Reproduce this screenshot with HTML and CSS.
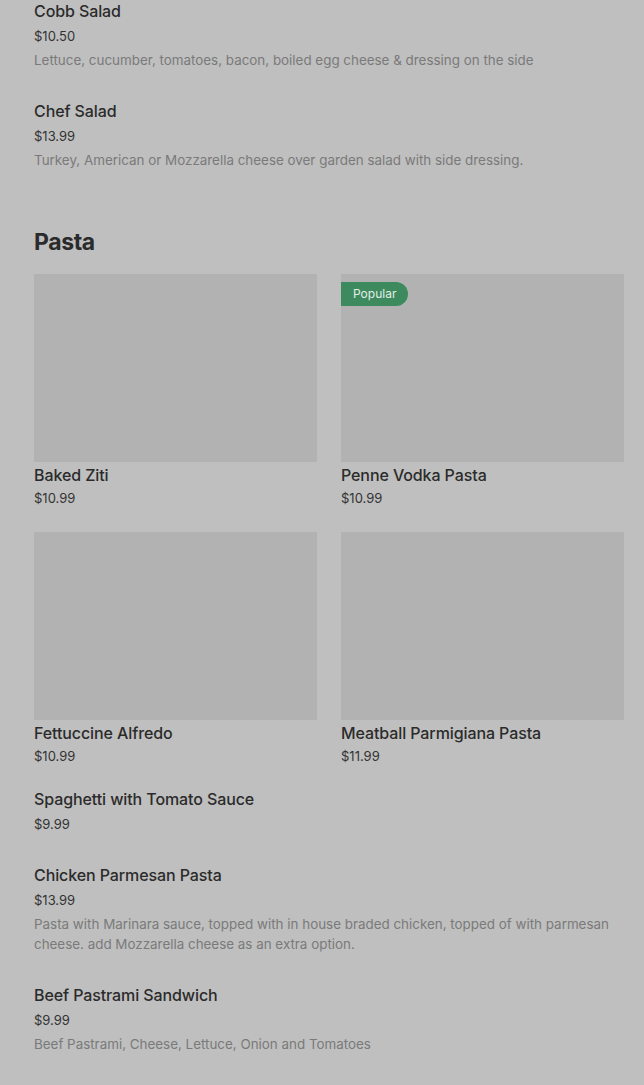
FILE: index.html
```html
<!DOCTYPE html>
<html>
<head>
<meta charset="utf-8">
<link rel="stylesheet" href="styles.css">
</head>
<body>
<main class="menu">
  <section class="list first">
    <div class="item">
      <div class="name">Cobb Salad</div>
      <div class="price">$10.50</div>
      <div class="desc">Lettuce, cucumber, tomatoes, bacon, boiled egg cheese &amp; dressing on the side</div>
    </div>
    <div class="item">
      <div class="name">Chef Salad</div>
      <div class="price">$13.99</div>
      <div class="desc">Turkey, American or Mozzarella cheese over garden salad with side dressing.</div>
    </div>
  </section>

  <h2 class="heading">Pasta</h2>

  <section class="grid">
    <div class="card">
      <div class="thumb"></div>
      <div class="name">Baked Ziti</div>
      <div class="price">$10.99</div>
    </div>
    <div class="card">
      <div class="thumb"><span class="badge">Popular</span></div>
      <div class="name">Penne Vodka Pasta</div>
      <div class="price">$10.99</div>
    </div>
    <div class="card">
      <div class="thumb"></div>
      <div class="name">Fettuccine Alfredo</div>
      <div class="price">$10.99</div>
    </div>
    <div class="card">
      <div class="thumb"></div>
      <div class="name">Meatball Parmigiana Pasta</div>
      <div class="price">$11.99</div>
    </div>
  </section>

  <section class="list">
    <div class="item">
      <div class="name">Spaghetti with Tomato Sauce</div>
      <div class="price">$9.99</div>
    </div>
    <div class="item">
      <div class="name">Chicken Parmesan Pasta</div>
      <div class="price">$13.99</div>
      <div class="desc">Pasta with Marinara sauce, topped with in house braded chicken, topped of with parmesan cheese. add Mozzarella cheese as an extra option.</div>
    </div>
    <div class="item">
      <div class="name">Beef Pastrami Sandwich</div>
      <div class="price">$9.99</div>
      <div class="desc">Beef Pastrami, Cheese, Lettuce, Onion and Tomatoes</div>
    </div>
  </section>
</main>
</body>
</html>
```

FILE: styles.css
```css
html, body {
  margin: 0;
  padding: 0;
  background: #bfbfbf;
}
body {
  font-family: Inter, "Noto Sans", "Liberation Sans", sans-serif;
  color: #2b2b2b;
  width: 644px;
  height: 1085px;
  overflow: hidden;
}
.menu {
  padding: 0 20px 0 34px;
}
.list.first {
  margin-top: -1px;
}
.item {
  padding-bottom: 29px;
}
.name {
  font-size: 16px;
  font-weight: 500;
  line-height: 24px;
  letter-spacing: -0.1px;
  color: #2b2b2b;
}
.price {
  margin-top: 3px;
  font-size: 13px;
  line-height: 20px;
  color: #333;
}
.desc {
  margin-top: 4px;
  font-size: 13.4px;
  line-height: 20px;
  color: #7a7a7a;
}
.heading {
  margin: 27px 0 0 0;
  font-size: 23px;
  font-weight: 700;
  line-height: 32px;
  color: #2b2b2b;
  letter-spacing: -0.4px;
}
.grid {
  margin-top: 16px;
  display: grid;
  grid-template-columns: 283px 283px;
  column-gap: 24px;
  row-gap: 24px;
}
.thumb {
  position: relative;
  height: 188px;
  background: #b2b2b2;
}
.card .name {
  line-height: 26px;
  margin-top: 0;
}
.card .price {
  margin-top: 0;
  line-height: 20px;
}
.grid + .list {
  margin-top: 21px;
}
.badge {
  position: absolute;
  left: 0;
  top: 8px;
  height: 24px;
  padding: 0 12px;
  display: flex;
  align-items: center;
  background: #3d8a5e;
  color: #e3eee7;
  font-size: 12px;
  line-height: 24px;
  border-radius: 0 12px 12px 0;
}
```
